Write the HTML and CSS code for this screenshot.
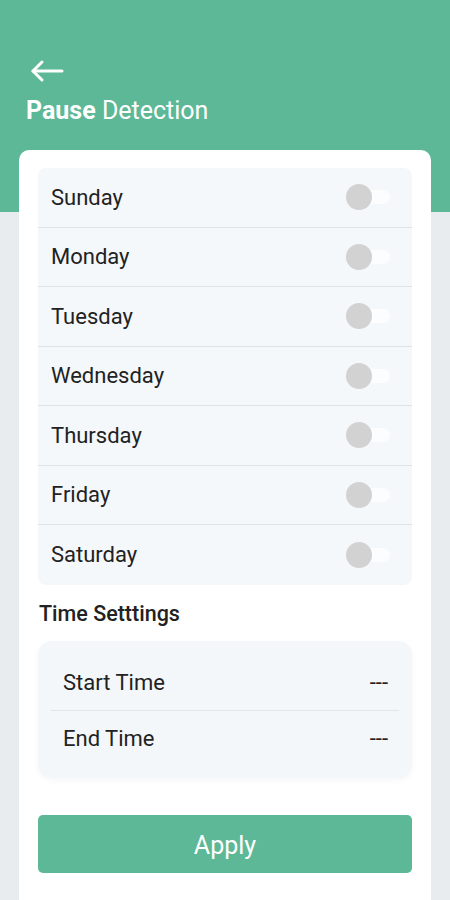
FILE: index.html
```html
<!DOCTYPE html>
<html lang="en">
<head>
    <meta charset="UTF-8">
    <meta name="viewport" content="width=device-width, initial-scale=1.0">
    <title>Pause Detection</title>
    <link rel="stylesheet" href="styles.css">
</head>
<body>
    <!-- Cabecera verde -->
    <div class="header">
        <button class="back-btn" aria-label="Back">
            <svg width="36" height="24" viewBox="0 0 36 24" fill="none" stroke="#fff" stroke-width="3" stroke-linecap="round" stroke-linejoin="round">
                <path d="M33 12H4"/>
                <path d="M13 3L4 12L13 21"/>
            </svg>
        </button>
        <h1 class="title"><b>Pause</b> Detection</h1>
    </div>

    <!-- Tarjeta principal -->
    <div class="card">
        <div class="days">
            <div class="day-row"><span>Sunday</span><span class="toggle"></span></div>
            <div class="day-row"><span>Monday</span><span class="toggle"></span></div>
            <div class="day-row"><span>Tuesday</span><span class="toggle"></span></div>
            <div class="day-row"><span>Wednesday</span><span class="toggle"></span></div>
            <div class="day-row"><span>Thursday</span><span class="toggle"></span></div>
            <div class="day-row"><span>Friday</span><span class="toggle"></span></div>
            <div class="day-row"><span>Saturday</span><span class="toggle"></span></div>
        </div>

        <h2 class="section-title">Time Setttings</h2>

        <div class="time-box">
            <div class="time-row"><span>Start Time</span><span>---</span></div>
            <div class="time-row"><span>End Time</span><span>---</span></div>
        </div>

        <button class="apply-btn">Apply</button>
    </div>
</body>
</html>
```

FILE: styles.css
```css
body {
    margin: 0;
    padding: 0;
    font-family: Roboto, 'Noto Sans', sans-serif;
    background: #e9ecee;
    color: #222;
    width: 450px;
    height: 900px;
    overflow: hidden;
}

/* Cabecera */
.header {
    background: #5cb896;
    height: 212px;
    padding: 59px 0 0 26px;
    box-sizing: border-box;
}

.back-btn {
    background: none;
    border: none;
    padding: 0;
    margin-left: 3px;
    display: block;
    cursor: pointer;
}

.title {
    margin: 10px 0 0;
    color: #fff;
    font-size: 25px;
    font-weight: 400;
}

.title b {
    font-weight: 700;
}

/* Tarjeta */
.card {
    background: #fff;
    margin: -62px 19px 0;
    border-radius: 10px;
    padding: 18px 19px 26px;
    box-sizing: border-box;
    height: 760px;
}

.days {
    background: #f5f8fb;
    border-radius: 8px;
}

.day-row {
    height: 59.5px;
    display: flex;
    align-items: center;
    justify-content: space-between;
    padding: 0 22px 0 13px;
    font-size: 22px;
    color: #222;
    border-bottom: 1.5px solid #dfe2e6;
    box-sizing: border-box;
}

.day-row:last-child {
    border-bottom: none;
}

.toggle {
    position: relative;
    width: 44px;
    height: 14px;
    border-radius: 7px;
    background: #fcfdfe;
}

.toggle::before {
    content: "";
    position: absolute;
    left: 0;
    top: -6px;
    width: 26px;
    height: 26px;
    border-radius: 50%;
    background: #d2d2d2;
}

.section-title {
    margin: 16px 0 15px 1px;
    font-size: 21.5px;
    font-weight: 500;
    color: #222;
}

.time-box {
    background: #f4f7fa;
    border-radius: 14px;
    padding: 14px 13px 12px;
    box-shadow: 0 2px 6px rgba(0, 0, 0, 0.04);
}

.time-row {
    height: 55px;
    display: flex;
    align-items: center;
    justify-content: space-between;
    padding: 0 11px 0 12px;
    font-size: 22px;
    color: #222;
}

.time-row:first-child {
    border-bottom: 1.5px solid #e3e6e9;
}

.apply-btn {
    display: block;
    width: 100%;
    height: 58px;
    margin-top: 37px;
    padding-top: 4px;
    background: #5cb896;
    color: #fff;
    border: none;
    border-radius: 5px;
    font-family: Roboto, 'Noto Sans', sans-serif;
    font-size: 25px;
    cursor: pointer;
}
```
